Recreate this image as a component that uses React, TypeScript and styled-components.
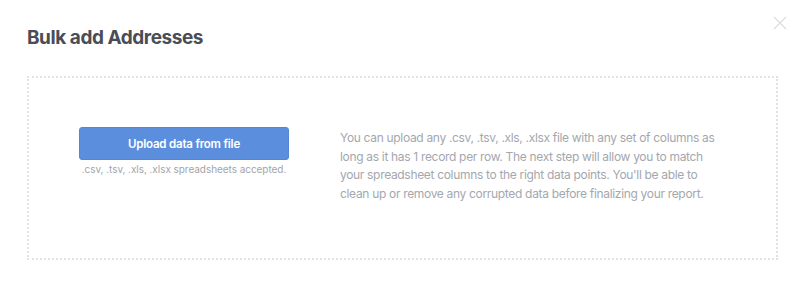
import React from 'react';
import styled, { createGlobalStyle } from 'styled-components';

const GlobalStyle = createGlobalStyle`
    html, body {
        margin: 0;
        padding: 0;
        background: #ffffff;
        font-family: Inter, 'Noto Sans', sans-serif;
    }
`;

const Modal = styled.div`
    position: relative;
    width: 806px;
    height: 290px;
    box-sizing: border-box;
    padding: 26px 28px 0 27px;
`;

const Title = styled.h2`
    margin: 0;
    font-size: 19px;
    line-height: 24px;
    font-weight: 700;
    color: #4a4d55;
    letter-spacing: -0.45px;
`;

const CloseButton = styled.button`
    position: absolute;
    top: 16px;
    right: 19px;
    width: 14px;
    height: 14px;
    padding: 0;
    border: none;
    background: none;
    cursor: pointer;
`;

const DropZone = styled.div`
    margin-top: 26px;
    width: 751px;
    height: 184px;
    box-sizing: border-box;
    border: 2px dotted #e1e2e4;
    display: flex;
    align-items: flex-start;
    padding: 49px 0 0 50px;
    gap: 51px;
`;

const UploadColumn = styled.div`
    display: flex;
    flex-direction: column;
    align-items: center;
    width: 210px;
`;

const UploadButton = styled.button`
    width: 210px;
    height: 33px;
    border: 1px solid #5387d6;
    border-radius: 3px;
    background: #5b8fdd;
    color: #ffffff;
    font-family: Inter, 'Noto Sans', sans-serif;
    font-size: 11.5px;
    font-weight: 600;
    letter-spacing: -0.2px;
    cursor: pointer;
`;

const Hint = styled.span`
    margin-top: 3px;
    font-size: 10px;
    letter-spacing: -0.05px;
    color: #a2a5ab;
    white-space: nowrap;
`;

const Description = styled.p`
    margin: 2px 0 0;
    width: 386px;
    font-size: 12px;
    line-height: 18.5px;
    letter-spacing: -0.32px;
    color: #a4a7ae;
`;

const App = (): JSX.Element => {
    return (
        <>
            <GlobalStyle />
            <Modal>
                <Title>Bulk add Addresses</Title>
                <CloseButton aria-label={'close'}>
                    <svg width="14" height="14" viewBox="0 0 14 14">
                        <path
                            d="M1 1 L13 13 M13 1 L1 13"
                            stroke="#dcdde0"
                            strokeWidth="1.3"
                        />
                    </svg>
                </CloseButton>
                <DropZone>
                    <UploadColumn>
                        <UploadButton>Upload data from file</UploadButton>
                        <Hint>.csv, .tsv, .xls, .xlsx spreadsheets accepted.</Hint>
                    </UploadColumn>
                    <Description>
                        You can upload any .csv, .tsv, .xls, .xlsx file with any set of
                        columns as long as it has 1 record per row. The next step will
                        allow you to match your spreadsheet columns to the right data
                        points. You'll be able to clean up or remove any corrupted data
                        before finalizing your report.
                    </Description>
                </DropZone>
            </Modal>
        </>
    );
};

export default App;
